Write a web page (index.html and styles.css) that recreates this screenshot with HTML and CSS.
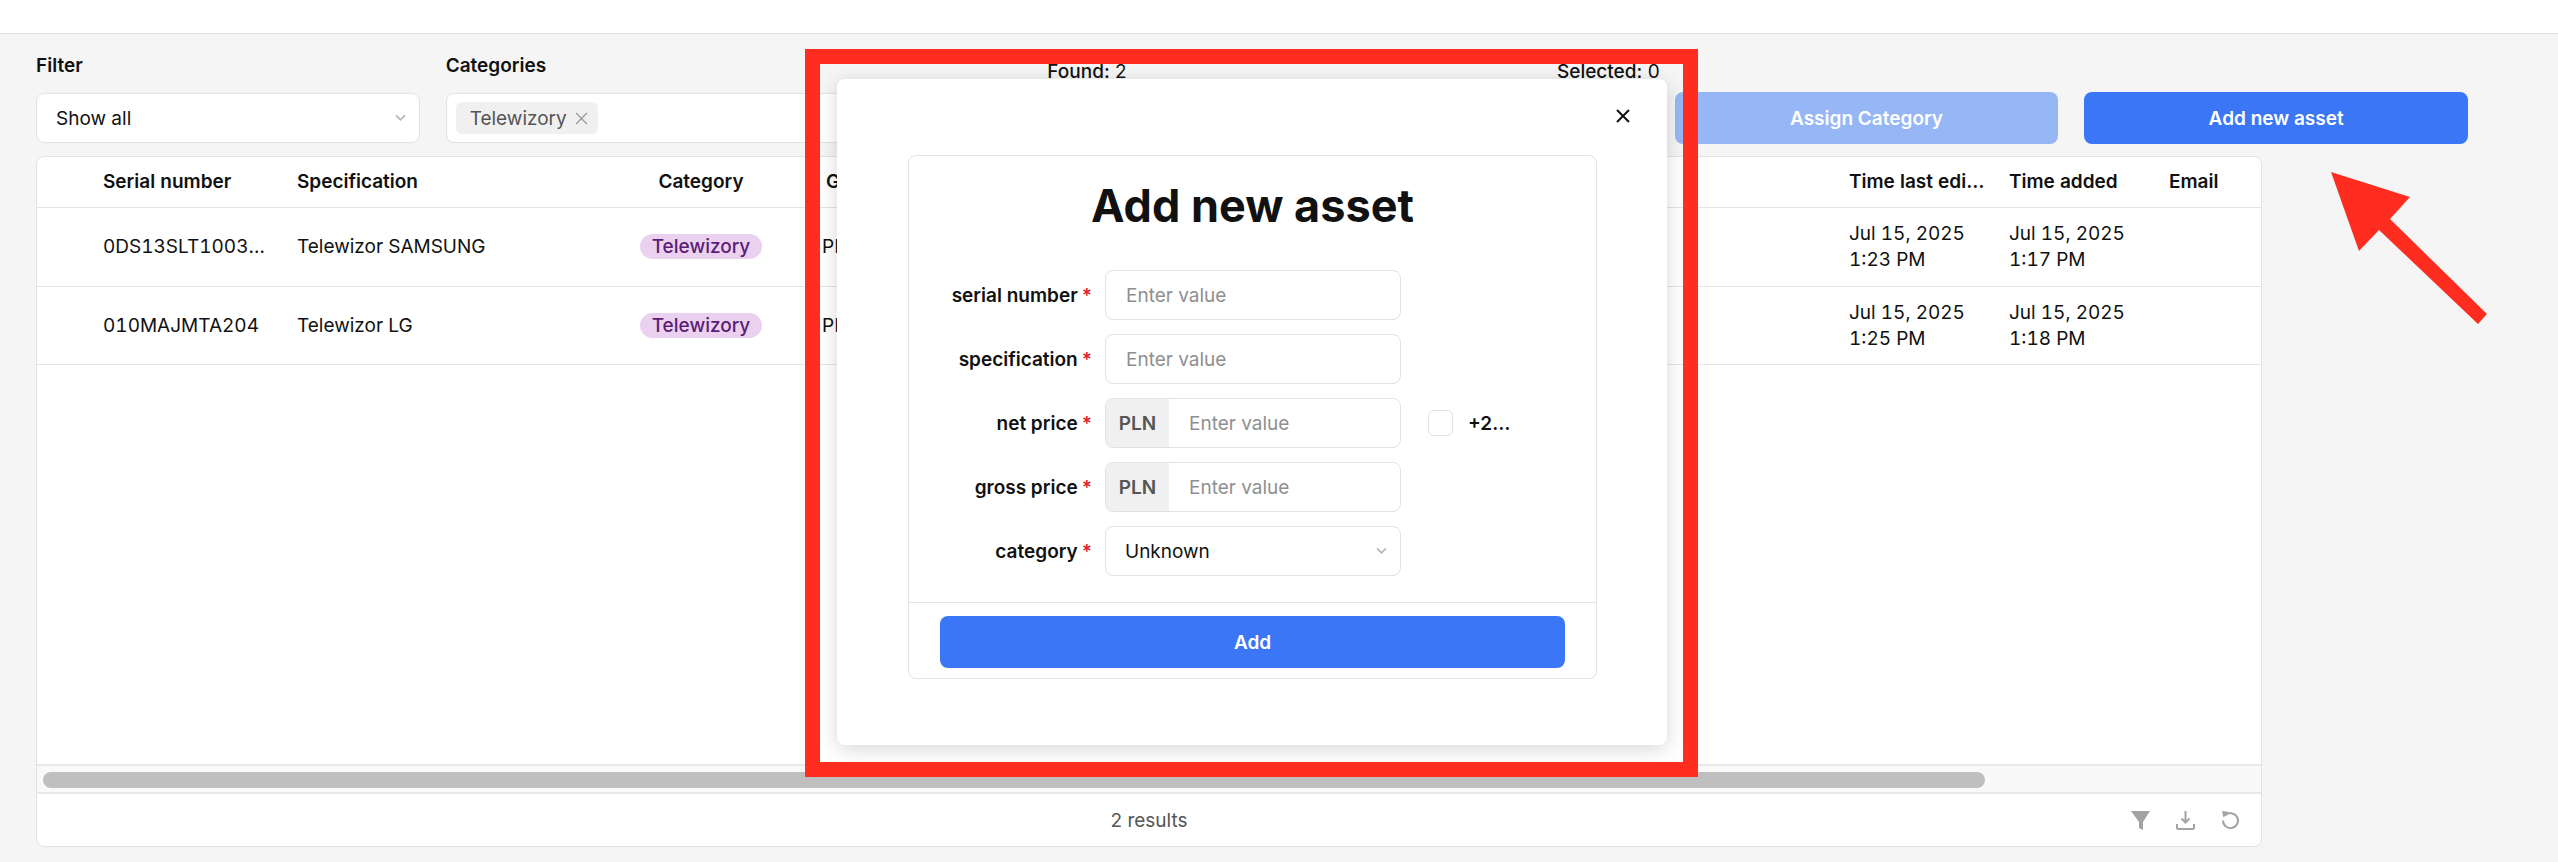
FILE: index.html
```html
<!DOCTYPE html>
<html lang="en">
<head>
    <meta charset="UTF-8">
    <meta name="viewport" content="width=device-width, initial-scale=1.0">
    <title>Assets</title>
    <link rel="stylesheet" href="styles.css">
</head>
<body>
    <div class="topbar"></div>

    <div class="toolbar">
        <div class="field">
            <div class="field-label">Filter</div>
            <div class="select">
                <span>Show all</span>
                <svg class="chevron" viewBox="0 0 10 7"><path d="M1 1.2l4 4 4-4" /></svg>
            </div>
        </div>
        <div class="field">
            <div class="field-label">Categories</div>
            <div class="select multi">
                <span class="tag">Telewizory <svg class="tag-x" viewBox="0 0 12 12"><path d="M1 1l10 10M11 1L1 11" /></svg></span>
            </div>
        </div>
        <div class="stat found"><strong>Found:</strong> 2</div>
        <div class="stat selected"><strong>Selected:</strong> 0</div>
        <button class="btn btn-faded">Assign Category</button>
        <button class="btn">Add new asset</button>
    </div>

    <div class="table-card">
        <div class="row head">
            <div class="cell"></div>
            <div class="cell">Serial number</div>
            <div class="cell">Specification</div>
            <div class="cell center">Category</div>
            <div class="cell gross">Gross price</div>
            <div class="cell wide-text">Time last edited</div>
            <div class="cell">Time added</div>
            <div class="cell">Email</div>
        </div>
        <div class="row first">
            <div class="cell"></div>
            <div class="cell">0DS13SLT1003921X</div>
            <div class="cell">Telewizor SAMSUNG</div>
            <div class="cell center"><span class="pill">Telewizory</span></div>
            <div class="cell price">PLN</div>
            <div class="cell">Jul 15, 2025<br>1:23 PM</div>
            <div class="cell">Jul 15, 2025<br>1:17 PM</div>
            <div class="cell"></div>
        </div>
        <div class="row">
            <div class="cell"></div>
            <div class="cell">010MAJMTA204</div>
            <div class="cell">Telewizor LG</div>
            <div class="cell center"><span class="pill">Telewizory</span></div>
            <div class="cell price">PLN</div>
            <div class="cell">Jul 15, 2025<br>1:25 PM</div>
            <div class="cell">Jul 15, 2025<br>1:18 PM</div>
            <div class="cell"></div>
        </div>
        <div class="table-space"></div>
        <div class="scroll-track"><div class="scroll-thumb"></div></div>
        <div class="table-foot">
            <span class="results">2 results</span>
            <div class="foot-icons">
                <svg class="foot-icon" viewBox="0 0 19 19"><path class="solid" d="M0 0h19l-7 11v8l-4-2v-6z" /></svg>
                <svg class="foot-icon" viewBox="0 0 19 19"><path d="M9.5 0v11M5.5 7.5l4 4 4-4M1 13v3.500a1.500 1.500 0 0 0 1.500 1.500h14a1.500 1.500 0 0 0 1.500-1.500V13" /></svg>
                <svg class="foot-icon" viewBox="0 0 19 19"><path d="M4 4.500a7.500 7.500 0 1 1-2 5" /><path class="solid" d="M1 0l7 1-5.500 5.500z" /></svg>
            </div>
        </div>
    </div>

    <div class="modal">
        <svg class="modal-close" viewBox="0 0 14 14"><path d="M1 1l12 12M13 1L1 13" /></svg>
        <div class="form-card">
            <h1>Add new asset</h1>
            <div class="form-rows">
                <label class="form-label">serial number<span class="req">*</span></label>
                <input class="input" placeholder="Enter value">
                <div></div>

                <label class="form-label">specification<span class="req">*</span></label>
                <input class="input" placeholder="Enter value">
                <div></div>

                <label class="form-label">net price<span class="req">*</span></label>
                <div class="input-group"><span class="addon">PLN</span><input class="input bare" placeholder="Enter value"></div>
                <div class="vat"><span class="checkbox"></span><span class="vat-text">+23% VAT</span></div>

                <label class="form-label">gross price<span class="req">*</span></label>
                <div class="input-group"><span class="addon">PLN</span><input class="input bare" placeholder="Enter value"></div>
                <div></div>

                <label class="form-label">category<span class="req">*</span></label>
                <div class="select form-select">
                    <span>Unknown</span>
                    <svg class="chevron" viewBox="0 0 10 7"><path d="M1 1.2l4 4 4-4" /></svg>
                </div>
                <div></div>
            </div>
            <div class="form-foot">
                <button class="btn btn-wide">Add</button>
            </div>
        </div>
    </div>

    <!-- annotations on top of the screenshot -->
    <div class="mark-box"></div>
    <svg class="mark-arrow" viewBox="0 0 156 152"><polygon points="0,0 79,25 59,47 156,142 147,152 48,58 28,79" /></svg>
</body>
</html>
```

FILE: styles.css
```css
* {
    box-sizing: border-box;
}
html, body {
    height: 100%;
}
body {
    margin: 0;
    background: #f5f5f5;
    color: #111;
    font-family: 'Inter', sans-serif;
    font-size: 19px;
    overflow: hidden;
    display: flex;
    flex-direction: column;
    position: relative;
}
.topbar {
    height: 34px;
    background: #fff;
    border-bottom: 1px solid #e3e3e3;
    flex: none;
}
.toolbar {
    display: grid;
    grid-template-columns: repeat(6, minmax(0, 1fr));
    column-gap: 26px;
    width: 2504px;
    padding: 20px 36px 12px;
    flex: none;
}
.field-label {
    font-size: 19px;
    font-weight: 600;
    line-height: 24px;
    margin-bottom: 15px;
}
.select {
    height: 50px;
    background: #fff;
    border: 1px solid #e2e2e2;
    border-radius: 8px;
    padding: 0 13px 0 19px;
    display: flex;
    align-items: center;
    justify-content: space-between;
}
.select.multi {
    padding: 0 9px;
    margin-right: -40px;
}
.chevron {
    width: 11px;
    height: 8px;
    fill: none;
    stroke: #b5b5b5;
    stroke-width: 1.6;
}
.tag {
    height: 32px;
    padding: 0 10px 0 14px;
    background: #f0f0f0;
    border-radius: 6px;
    color: #555;
    display: inline-flex;
    align-items: center;
    gap: 8px;
}
.tag-x {
    width: 13px;
    height: 13px;
    fill: none;
    stroke: #9a9a9a;
    stroke-width: 1.2;
}
.stat {
    font-size: 19px;
    line-height: 24px;
    padding-top: 6px;
}
.stat strong {
    font-weight: 500;
}
.found {
    padding-left: 192px;
}
.selected {
    padding-left: 292px;
    white-space: nowrap;
}
.btn {
    height: 52px;
    background: #3b76f6;
    color: #fff;
    border: none;
    border-radius: 8px;
    font-family: inherit;
    font-size: 19px;
    font-weight: 600;
}
.toolbar .btn {
    margin-top: 38px;
}
.btn-faded {
    background: #97b6f6;
}
.btn-wide {
    width: 100%;
    display: block;
}
.table-card {
    width: 2226px;
    margin: 0 0 15px 36px;
    flex: 1;
    background: #fff;
    border: 1px solid #e2e2e2;
    border-radius: 8px;
    display: flex;
    flex-direction: column;
    overflow: hidden;
}
.row {
    display: grid;
    grid-template-columns: 50px 194px 311px 218px 1023px 160px 160px 108px;
    height: 78px;
    border-bottom: 1px solid #e4e4e4;
    align-items: center;
    flex: none;
    line-height: 26px;
    font-variant-numeric: tabular-nums;
}
.row.first {
    height: 79px;
}
.row.head {
    height: 51px;
    font-weight: 600;
}
.cell {
    padding: 0 12px 0 16px;
    overflow: hidden;
    white-space: nowrap;
    text-overflow: ellipsis;
}
.cell.center {
    text-align: center;
    padding: 0;
}
.cell.price {
    padding-left: 12px;
}
.cell.wide-text {
    padding-right: 6px;
}
.pill {
    display: inline-block;
    background: #ebd1f0;
    color: #5b1e75;
    font-weight: 500;
    line-height: 25px;
    padding: 0 12px;
    border-radius: 13px;
}
.table-space {
    flex: 1;
}
.scroll-track {
    height: 30px;
    padding: 6px 6px;
    background: #f9f9f9;
    border-top: 2px solid #e8e8e8;
    border-bottom: 2px solid #e8e8e8;
    flex: none;
}
.scroll-thumb {
    width: 1942px;
    height: 16px;
    background: #bfbfbf;
    border-radius: 8px;
}
.table-foot {
    height: 52px;
    display: flex;
    align-items: center;
    justify-content: center;
    flex: none;
    position: relative;
    color: #555;
}
.foot-icons {
    position: absolute;
    left: 2094px;
    top: 17px;
    display: flex;
    gap: 26px;
}
.foot-icon {
    width: 19px;
    height: 19px;
    fill: none;
    stroke: #a3a3a3;
    stroke-width: 2;
}
.foot-icon .solid {
    fill: #a3a3a3;
    stroke: none;
}
.modal {
    position: absolute;
    left: 837px;
    top: 79px;
    width: 830px;
    height: 666px;
    background: #fff;
    border-radius: 8px;
    box-shadow: 0 4px 20px rgba(0, 0, 0, 0.16);
    padding: 76px 70px 0 71px;
}
.modal-close {
    position: absolute;
    right: 37px;
    top: 30px;
    width: 14px;
    height: 14px;
    fill: none;
    stroke: #111;
    stroke-width: 2;
}
.form-card {
    border: 1px solid #e2e2e2;
    border-radius: 8px;
}
.form-card h1 {
    margin: 0;
    padding-top: 22px;
    font-size: 45px;
    font-weight: 700;
    line-height: 56px;
    text-align: center;
    margin-bottom: 36px;
}
.form-rows {
    display: grid;
    grid-template-columns: 183px 296px 1fr;
    column-gap: 13px;
    row-gap: 14px;
    align-items: center;
    padding-bottom: 26px;
    border-bottom: 1px solid #e4e4e4;
}
.form-label {
    font-weight: 600;
    font-size: 19px;
    text-align: right;
}
.req {
    color: #e0202c;
    margin-left: 4px;
}
.input {
    height: 50px;
    width: 100%;
    background: #fff;
    border: 1px solid #e2e2e2;
    border-radius: 8px;
    padding: 0 20px;
    font-family: inherit;
    font-size: 19px;
    color: #111;
}
.input::placeholder {
    color: #8f8f8f;
    opacity: 1;
}
.input.bare {
    border: none;
    border-radius: 0 8px 8px 0;
    height: 48px;
    flex: 1;
    min-width: 0;
}
.input-group {
    display: flex;
    height: 50px;
    border: 1px solid #e2e2e2;
    border-radius: 8px;
    overflow: hidden;
}
.addon {
    width: 63px;
    background: #f0f0f0;
    color: #555;
    font-weight: 600;
    display: flex;
    align-items: center;
    justify-content: center;
    flex: none;
}
.vat {
    display: flex;
    align-items: center;
    gap: 15px;
    margin-left: 14px;
}
.checkbox {
    width: 25px;
    height: 26px;
    background: #fff;
    border: 1px solid #e2e2e2;
    border-radius: 6px;
    flex: none;
}
.vat-text {
    font-weight: 600;
    width: 44px;
    overflow: hidden;
    white-space: nowrap;
    text-overflow: ellipsis;
}
.form-foot {
    padding: 13px 31px 10px;
}
.mark-box {
    position: absolute;
    left: 805px;
    top: 49px;
    width: 893px;
    height: 728px;
    border: 15px solid #ff2d20;
}
.mark-arrow {
    position: absolute;
    left: 2331px;
    top: 172px;
    width: 156px;
    height: 152px;
    fill: #ff2d20;
}
```
